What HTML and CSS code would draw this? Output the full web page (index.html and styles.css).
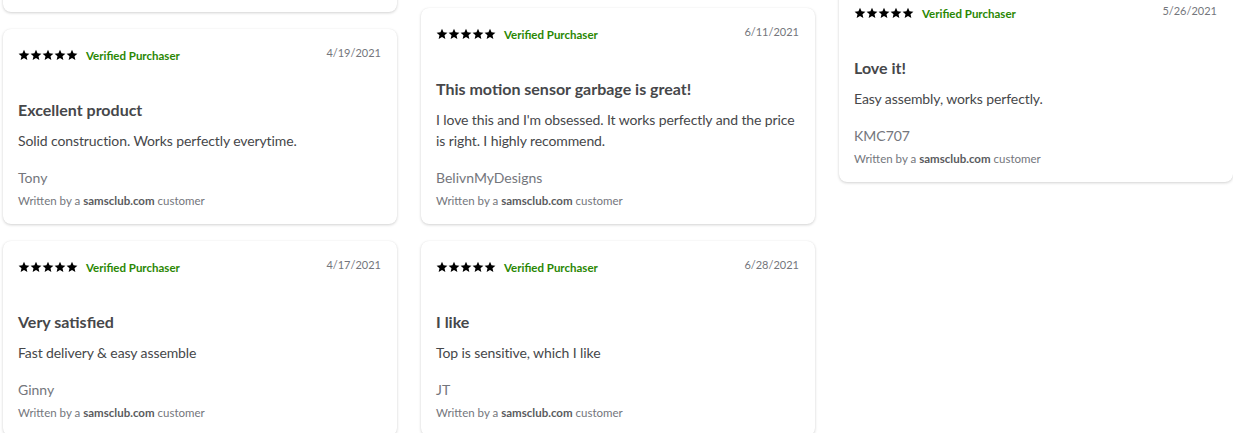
FILE: index.html
```html
<!DOCTYPE html>
<html lang="en">
<head>
<meta charset="utf-8">
<title>Reviews</title>
<link rel="stylesheet" href="styles.css">
</head>
<body>
<svg width="0" height="0" class="defs" aria-hidden="true">
  <defs>
    <symbol id="star" viewBox="0 0 24 24">
      <path d="M12 1.5l3.1 7.1 7.7.7-5.8 5.1 1.7 7.6L12 18l-6.7 4 1.7-7.6-5.8-5.1 7.7-.7z"/>
    </symbol>
  </defs>
</svg>
<div class="viewport">
  <div class="grid">
    <div class="col">
      <article class="card">
        <div class="head">
          <div class="rating"><span class="stars"><svg><use href="#star"/></svg><svg><use href="#star"/></svg><svg><use href="#star"/></svg><svg><use href="#star"/></svg><svg><use href="#star"/></svg></span><span class="verified">Verified Purchaser</span></div>
          <span class="date">5/02/2021</span>
        </div>
        <h3 class="title">Works great</h3>
        <p class="body">Bought this for the kitchen and it has been great so far. The lid opens every time I wave my hand and closes quietly. Holds a full bag without any problem.</p>
        <p class="name">Maria</p>
        <p class="src">Written by a <b>samsclub.com</b> customer</p>
      </article>
      <article class="card">
        <div class="head">
          <div class="rating"><span class="stars"><svg><use href="#star"/></svg><svg><use href="#star"/></svg><svg><use href="#star"/></svg><svg><use href="#star"/></svg><svg><use href="#star"/></svg></span><span class="verified">Verified Purchaser</span></div>
          <span class="date">4/19/2021</span>
        </div>
        <h3 class="title">Excellent product</h3>
        <p class="body">Solid construction. Works perfectly everytime.</p>
        <p class="name">Tony</p>
        <p class="src">Written by a <b>samsclub.com</b> customer</p>
      </article>
      <article class="card">
        <div class="head">
          <div class="rating"><span class="stars"><svg><use href="#star"/></svg><svg><use href="#star"/></svg><svg><use href="#star"/></svg><svg><use href="#star"/></svg><svg><use href="#star"/></svg></span><span class="verified">Verified Purchaser</span></div>
          <span class="date">4/17/2021</span>
        </div>
        <h3 class="title">Very satisfied</h3>
        <p class="body">Fast delivery &amp; easy assemble</p>
        <p class="name">Ginny</p>
        <p class="src">Written by a <b>samsclub.com</b> customer</p>
      </article>
    </div>
    <div class="col">
      <article class="card">
        <div class="head">
          <div class="rating"><span class="stars"><svg><use href="#star"/></svg><svg><use href="#star"/></svg><svg><use href="#star"/></svg><svg><use href="#star"/></svg><svg><use href="#star"/></svg></span><span class="verified">Verified Purchaser</span></div>
          <span class="date">6/14/2021</span>
        </div>
        <h3 class="title">Great trash can</h3>
        <p class="body">Very sturdy and looks nice in the kitchen. The sensor works well and the battery lasts long.</p>
        <p class="name">Dave</p>
        <p class="src">Written by a <b>samsclub.com</b> customer</p>
      </article>
      <article class="card">
        <div class="head">
          <div class="rating"><span class="stars"><svg><use href="#star"/></svg><svg><use href="#star"/></svg><svg><use href="#star"/></svg><svg><use href="#star"/></svg><svg><use href="#star"/></svg></span><span class="verified">Verified Purchaser</span></div>
          <span class="date">6/11/2021</span>
        </div>
        <h3 class="title">This motion sensor garbage is great!</h3>
        <p class="body">I love this and I'm obsessed. It works perfectly and the price is right. I highly recommend.</p>
        <p class="name">BelivnMyDesigns</p>
        <p class="src">Written by a <b>samsclub.com</b> customer</p>
      </article>
      <article class="card">
        <div class="head">
          <div class="rating"><span class="stars"><svg><use href="#star"/></svg><svg><use href="#star"/></svg><svg><use href="#star"/></svg><svg><use href="#star"/></svg><svg><use href="#star"/></svg></span><span class="verified">Verified Purchaser</span></div>
          <span class="date">6/28/2021</span>
        </div>
        <h3 class="title">I like</h3>
        <p class="body">Top is sensitive, which I like</p>
        <p class="name">JT</p>
        <p class="src">Written by a <b>samsclub.com</b> customer</p>
      </article>
    </div>
    <div class="col">
      <article class="card">
        <div class="head">
          <div class="rating"><span class="stars"><svg><use href="#star"/></svg><svg><use href="#star"/></svg><svg><use href="#star"/></svg><svg><use href="#star"/></svg><svg><use href="#star"/></svg></span><span class="verified">Verified Purchaser</span></div>
          <span class="date">6/02/2021</span>
        </div>
        <h3 class="title">Perfect</h3>
        <p class="body">Exactly what we needed.</p>
        <p class="name">Sam</p>
        <p class="src">Written by a <b>samsclub.com</b> customer</p>
      </article>
      <article class="card">
        <div class="head">
          <div class="rating"><span class="stars"><svg><use href="#star"/></svg><svg><use href="#star"/></svg><svg><use href="#star"/></svg><svg><use href="#star"/></svg><svg><use href="#star"/></svg></span><span class="verified">Verified Purchaser</span></div>
          <span class="date">5/26/2021</span>
        </div>
        <h3 class="title">Love it!</h3>
        <p class="body">Easy assembly, works perfectly.</p>
        <p class="name">KMC707</p>
        <p class="src">Written by a <b>samsclub.com</b> customer</p>
      </article>
    </div>
  </div>
</div>
</body>
</html>
```

FILE: styles.css
```css
* { box-sizing: border-box; }
html, body {
  margin: 0;
  padding: 0;
  background: #ffffff;
  overflow: hidden;
}
body {
  font-family: "Lato", "Open Sans", "Liberation Sans", sans-serif;
  color: #46474a;
}
.defs { position: absolute; width: 0; height: 0; overflow: hidden; }
.viewport {
  height: 433px;
  overflow: hidden;
}
.grid {
  display: grid;
  grid-template-columns: 394px 394px 394px;
  column-gap: 24px;
  padding-left: 3px;
  margin-top: -225px;
  align-items: start;
}
.col {
  display: flex;
  flex-direction: column;
  gap: 17px;
}
.card {
  background: #fff;
  border-radius: 8px;
  box-shadow: 0 1px 3px rgba(0, 0, 0, 0.18), 0 0 1px rgba(0, 0, 0, 0.06);
  padding: 16px 14px 15px 15px;
}
.head {
  display: flex;
  justify-content: space-between;
  align-items: flex-start;
  height: 20px;
  padding-right: 2px;
}
.rating {
  display: flex;
  align-items: center;
  height: 20px;
}
.stars {
  display: flex;
  gap: 0;
}
.stars svg {
  width: 12px;
  height: 12px;
  fill: #000;
}
.verified {
  margin-left: 8px;
  font-size: 11.5px;
  font-weight: 700;
  color: #2a8703;
}
.date {
  font-size: 11px;
  color: #74767c;
  line-height: 16px;
}
.title {
  margin: 33px 0 0;
  font-size: 16px;
  line-height: 24px;
  font-weight: 700;
  color: #46474a;
}
.body {
  margin: 8px 0 0;
  font-size: 14px;
  line-height: 21px;
  letter-spacing: -0.1px;
  color: #46474a;
}
.name {
  margin: 16px 0 0;
  font-size: 14px;
  line-height: 21px;
  color: #74767c;
}
.src {
  margin: 5px 0 0;
  font-size: 11.5px;
  line-height: 16px;
  color: #74767c;
}
.src b {
  font-weight: 700;
  color: #5a5b5e;
}
```
